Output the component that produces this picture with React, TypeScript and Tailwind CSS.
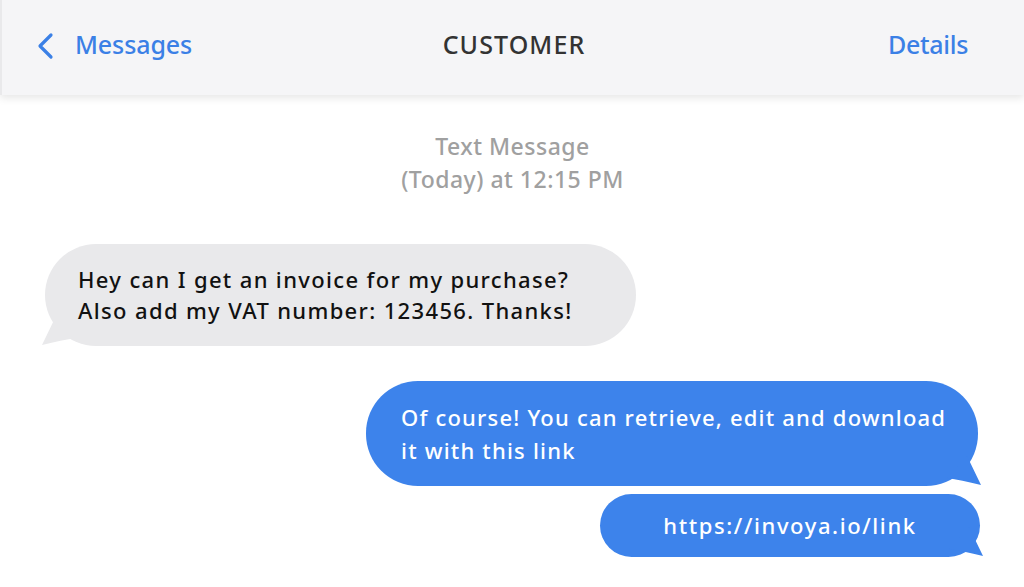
import React from "react";

const font = { fontFamily: '"Noto Sans", "Open Sans", sans-serif' };

function Tail({ side, color }: { side: "left" | "right"; color: string }) {
  if (side === "left") {
    return (
      <svg
        className="absolute left-[-3px] bottom-0"
        width="36"
        height="30"
        viewBox="0 0 36 30"
      >
        <path d="M14 0 L0 29 Q20 24 34 22 Z" fill={color} />
      </svg>
    );
  }
  return (
    <svg
      className="absolute right-[-3px] bottom-0"
      width="36"
      height="30"
      viewBox="0 0 36 30"
    >
      <path d="M22 0 L36 29 Q16 24 2 22 Z" fill={color} />
    </svg>
  );
}

export default function App() {
  return (
    <div className="w-[1024px] h-[587px] overflow-hidden bg-white" style={font}>
      <header className="relative z-10 h-[95px] bg-[#f5f5f7] border-l-2 border-[#e9e9eb] shadow-[0_3px_8px_rgba(0,0,0,0.10)] flex items-center justify-between pl-[34px] pr-[56px] pb-[5px]">
        <div className="flex items-center gap-[21px] text-[#3b80e6]">
          <svg width="18" height="28" viewBox="0 0 18 28" fill="none" className="mt-[2px]">
            <path
              d="M15 3 L4 14 L15 25"
              stroke="#3b80e6"
              strokeWidth="3.2"
              strokeLinecap="round"
              strokeLinejoin="round"
            />
          </svg>
          <span className="text-[25px] font-medium tracking-[-0.1px]">Messages</span>
        </div>
        <span className="absolute left-1/2 -translate-x-1/2 ml-[1px] text-[25px] font-medium text-[#333333] tracking-[1.1px]">
          CUSTOMER
        </span>
        <span className="text-[25px] font-medium text-[#3b80e6] tracking-[-0.3px]">Details</span>
      </header>

      <main className="flex flex-col pl-[45px] pr-[44px] pt-[35px]">
        <div className="flex flex-col items-center text-[#a0a0a0] text-[23px] font-medium leading-[33px] tracking-[0.5px]">
          <span>Text Message</span>
          <span>(Today) at 12:15 PM</span>
        </div>

        <div className="mt-[48px] flex">
          <div className="relative w-[591px] h-[102px] rounded-[51px] bg-[#e9e9eb] pl-[33px] flex flex-col justify-center text-[22px] font-medium leading-[31px] tracking-[1.35px] text-[#111111]">
            <Tail side="left" color="#e9e9eb" />
            <span className="relative">Hey can I get an invoice for my purchase?</span>
            <span className="relative">Also add my VAT number: 123456. Thanks!</span>
          </div>
        </div>

        <div className="mt-[35px] flex flex-col items-end gap-[8px]">
          <div className="relative mr-[2px] w-[612px] h-[105px] rounded-[52px] bg-[#3d83eb] pl-[35px] flex flex-col justify-center text-[22px] font-medium leading-[33px] tracking-[1.2px] text-white">
            <Tail side="right" color="#3d83eb" />
            <span className="relative">Of course! You can retrieve, edit and download</span>
            <span className="relative">it with this link</span>
          </div>
          <div className="relative w-[380px] h-[63px] rounded-[32px] bg-[#3d83eb] flex items-center justify-center text-[22px] font-medium tracking-[1.6px] text-white">
            <Tail side="right" color="#3d83eb" />
            <span className="relative">https://invoya.io/link</span>
          </div>
        </div>
      </main>
    </div>
  );
}
